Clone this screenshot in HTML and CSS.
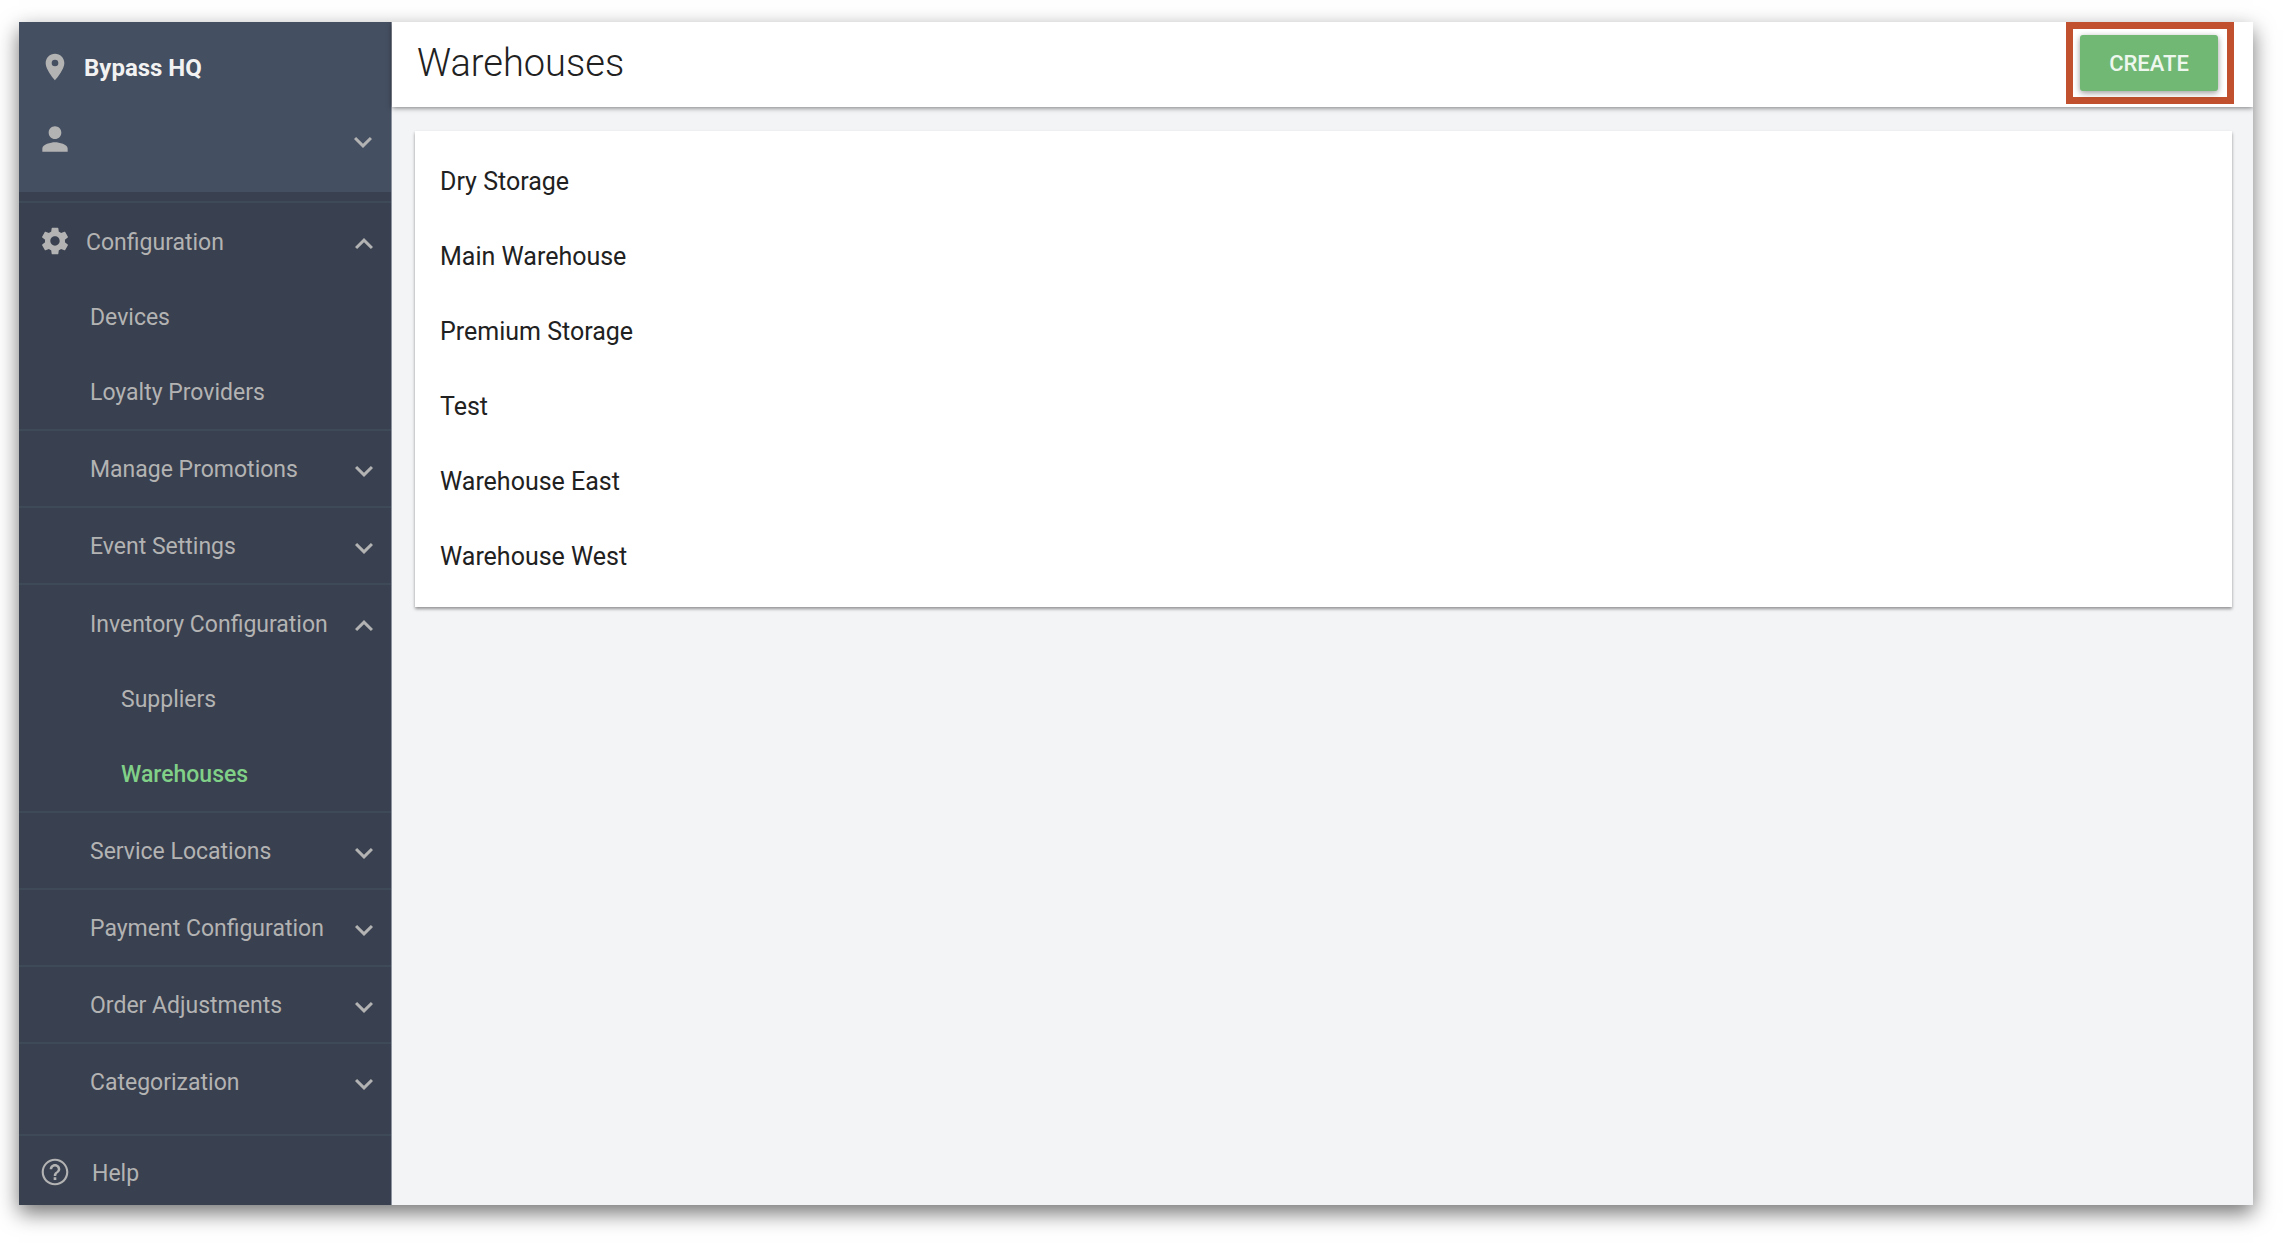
FILE: index.html
```html
<!DOCTYPE html>
<html lang="en">
<head>
  <meta charset="UTF-8">
  <title>Warehouses</title>
  <meta name="viewport" content="width=device-width, initial-scale=1.0">
  <link rel="stylesheet" href="styles.css">
</head>
<body>
  <!-- shared icons -->
  <svg class="sprite" aria-hidden="true">
    <symbol id="down" viewBox="0 0 24 24"><path d="M7.41 8.59 12 13.17l4.59-4.58L18 10l-6 6-6-6z"/></symbol>
    <symbol id="up" viewBox="0 0 24 24"><path d="M12 8l-6 6 1.41 1.41L12 10.83l4.59 4.58L18 14z"/></symbol>
  </svg>

  <div class="app">
    <nav class="sidebar">
      <div class="account">
        <div class="account-row">
          <span class="icon"><svg width="32" height="32" viewBox="0 0 24 24"><path d="M12 2C8.13 2 5 5.13 5 9c0 5.25 7 13 7 13s7-7.75 7-13c0-3.87-3.13-7-7-7zm0 9.5a2.5 2.5 0 1 1 0-5 2.5 2.5 0 0 1 0 5z"/></svg></span>
          <strong class="venue">Bypass HQ</strong>
        </div>
        <button class="account-row" aria-label="Account">
          <span class="icon"><svg width="38" height="38" viewBox="0 0 24 24"><path d="M12 12c2.21 0 4-1.79 4-4s-1.79-4-4-4-4 1.79-4 4 1.79 4 4 4zm0 2c-2.67 0-8 1.34-8 4v2h16v-2c0-2.66-5.33-4-8-4z"/></svg></span>
          <svg class="chevron"><use href="#down"/></svg>
        </button>
      </div>

      <div class="menu">
        <div class="group">
          <button class="item top">
            <span class="icon"><svg width="32" height="32" viewBox="0 0 24 24"><path d="M19.43 12.98c.04-.32.07-.64.07-.98s-.03-.66-.07-.98l2.11-1.65c.19-.15.24-.42.12-.64l-2-3.46c-.12-.22-.39-.3-.61-.22l-2.49 1c-.52-.4-1.08-.73-1.69-.98l-.38-2.65C14.46 2.18 14.25 2 14 2h-4c-.25 0-.46.18-.49.42l-.38 2.65c-.61.25-1.17.59-1.69.98l-2.49-1c-.23-.09-.49 0-.61.22l-2 3.46c-.13.22-.07.49.12.64l2.11 1.65c-.04.32-.07.65-.07.98s.03.66.07.98l-2.11 1.65c-.19.15-.24.42-.12.64l2 3.46c.12.22.39.3.61.22l2.49-1c.52.4 1.08.73 1.69.98l.38 2.65c.03.24.24.42.49.42h4c.25 0 .46-.18.49-.42l.38-2.65c.61-.25 1.17-.59 1.69-.98l2.49 1c.23.09.49 0 .61-.22l2-3.46c.12-.22.07-.49-.12-.64l-2.11-1.65zM12 15.5c-1.93 0-3.5-1.57-3.5-3.5s1.57-3.5 3.5-3.5 3.5 1.57 3.5 3.5-1.57 3.5-3.5 3.5z"/></svg></span>
            Configuration
            <svg class="chevron"><use href="#up"/></svg>
          </button>
          <a class="item" href="#">Devices</a>
          <a class="item" href="#">Loyalty Providers</a>
        </div>
        <div class="group">
          <button class="item">Manage Promotions <svg class="chevron"><use href="#down"/></svg></button>
        </div>
        <div class="group">
          <button class="item">Event Settings <svg class="chevron"><use href="#down"/></svg></button>
        </div>
        <div class="group">
          <button class="item">Inventory Configuration <svg class="chevron"><use href="#up"/></svg></button>
          <a class="item sub" href="#">Suppliers</a>
          <a class="item sub active" href="#">Warehouses</a>
        </div>
        <div class="group">
          <button class="item">Service Locations <svg class="chevron"><use href="#down"/></svg></button>
        </div>
        <div class="group">
          <button class="item">Payment Configuration <svg class="chevron"><use href="#down"/></svg></button>
        </div>
        <div class="group">
          <button class="item">Order Adjustments <svg class="chevron"><use href="#down"/></svg></button>
        </div>
        <div class="group">
          <button class="item">Categorization <svg class="chevron"><use href="#down"/></svg></button>
        </div>
      </div>

      <a class="help" href="#">
        <span class="icon"><svg width="32" height="32" viewBox="0 0 24 24"><path d="M11 18h2v-2h-2v2zm1-16C6.48 2 2 6.48 2 12s4.48 10 10 10 10-4.48 10-10S17.52 2 12 2zm0 18.400c-4.630 0-8.400-3.770-8.400-8.400S7.370 3.600 12 3.600s8.400 3.770 8.400 8.400-3.770 8.400-8.400 8.400zM12 6c-2.210 0-4 1.790-4 4h1.900c0-1.160.940-2.100 2.100-2.100s2.100.940 2.100 2.100c0 2-3.050 1.750-3.050 5h1.900c0-2.250 3.050-2.500 3.050-5 0-2.210-1.790-4-4-4z"/></svg></span>
        Help
      </a>
    </nav>

    <main class="content">
      <header class="header">
        <h1>Warehouses</h1>
        <div class="highlight"><button class="create">CREATE</button></div>
      </header>
      <ul class="card">
        <li>Dry Storage</li>
        <li>Main Warehouse</li>
        <li>Premium Storage</li>
        <li>Test</li>
        <li>Warehouse East</li>
        <li>Warehouse West</li>
      </ul>
    </main>
  </div>
</body>
</html>
```
FILE: styles.css
```css
* {
  box-sizing: border-box;
}

body {
  margin: 0;
  min-height: 100vh;
  padding: 22px 43px 39px 19px;
  display: flex;
  background: #fff;
  font-family: Roboto, "Liberation Sans", sans-serif;
  font-size: 23px;
}

button {
  border: none;
  background: none;
  font: inherit;
  color: inherit;
  text-align: left;
  cursor: pointer;
}

a {
  color: inherit;
  text-decoration: none;
}

svg {
  display: block;
  fill: currentColor;
}

.sprite {
  position: absolute;
  width: 0;
  height: 0;
}

.app {
  flex: 1;
  display: flex;
  box-shadow: 0 8px 20px rgba(0, 0, 0, 0.55);
}

/* Sidebar */
.sidebar {
  width: 373px;
  flex-shrink: 0;
  display: flex;
  flex-direction: column;
  background: #39404f;
  border-right: 1px solid #8d939f;
  color: #b3b3b3;
}

.account {
  padding: 10px 0 16px;
  background: #444f61;
}

.account-row {
  width: 100%;
  height: 72px;
  display: flex;
  align-items: center;
  padding: 0 10px 0 16px;
}

.icon {
  width: 40px;
  padding-bottom: 2px;
  flex-shrink: 0;
  display: flex;
  justify-content: center;
}

.venue {
  margin-left: 9px;
  color: #f2f2f2;
  font-size: 24px;
}

.chevron {
  width: 36px;
  height: 36px;
  margin-left: auto;
  margin-top: 4px;
  flex-shrink: 0;
}

.menu {
  flex: 1;
  padding-top: 9px;
}

.group {
  border-top: 2px solid #3f4a59;
}

.group:has(a) {
  padding-top: 1px;
}

.item {
  width: 100%;
  height: 75px;
  display: flex;
  align-items: center;
  padding: 1px 9px 0 71px;
}

.item.top {
  gap: 11px;
  padding-left: 16px;
}

.item.sub {
  padding-left: 102px;
}

.item.active {
  color: #81d088;
  font-weight: 500;
}

.help {
  height: 71px;
  display: flex;
  align-items: center;
  gap: 17px;
  padding: 6px 16px 0;
  border-top: 2px solid #3f4a59;
}

.help .icon {
  padding-bottom: 4px;
}

/* Content */
.content {
  flex: 1;
  background: #f3f4f6;
}

.header {
  position: relative;
  height: 85px;
  display: flex;
  justify-content: space-between;
  align-items: flex-start;
  padding: 0 19px 0 25px;
  background: #fff;
  box-shadow: 0 1px 5px rgba(0, 0, 0, 0.5);
  clip-path: inset(0 0 -10px -10px);
}

h1 {
  margin: 0;
  font-size: 38px;
  font-weight: 300;
  line-height: 82px;
  color: #212121;
}

.highlight {
  padding: 6px 9px 6px 7px;
  border: 7px solid #c0502e;
}

.create {
  display: block;
  width: 138px;
  height: 56px;
  padding: 0;
  border-radius: 3px;
  background: #71b874;
  box-shadow: 0 2px 6px rgba(0, 0, 0, 0.4);
  color: #eef7ee;
  font-size: 22px;
  font-weight: 500;
  text-align: center;
}

.card {
  margin: 24px 21px 0 23px;
  padding: 13px 25px;
  list-style: none;
  background: #fff;
  box-shadow: 0 2px 3px rgba(0, 0, 0, 0.4);
  color: #212121;
  font-size: 25px;
  line-height: 75px;
}
```
